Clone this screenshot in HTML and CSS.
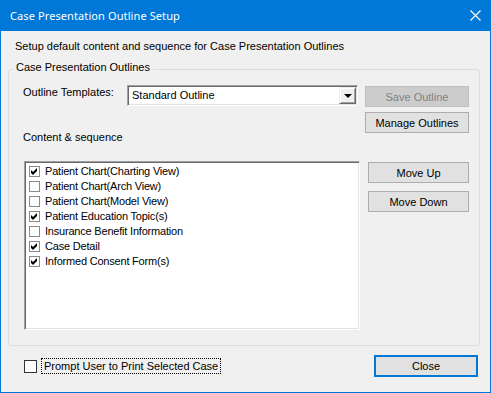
FILE: index.html
```html
<!DOCTYPE html>
<html lang="en">
<head>
  <meta charset="UTF-8" />
  <title>Case Presentation Outline Setup</title>
  <link rel="stylesheet" href="styles.css">
</head>
<body>
  <div class="window">
    <div class="titlebar">
      <span class="title">Case Presentation Outline Setup</span>
      <svg class="close-x" width="11" height="11" viewBox="0 0 11 11">
        <path d="M0.5 0.5 L10.5 10.5 M10.5 0.5 L0.5 10.5" stroke="#fff" stroke-width="1.1" fill="none" />
      </svg>
    </div>

    <div class="content">
      <p class="intro">Setup default content and sequence for Case Presentation Outlines</p>

      <div class="group">
        <span class="group-title">Case Presentation Outlines</span>

        <div class="top-row">
          <div class="left-col">
            <div class="template-row">
              <label class="field-label">Outline Templates:</label>
              <div class="combo">
                <span class="combo-text">Standard Outline</span>
                <span class="combo-btn"><i class="arrow"></i></span>
              </div>
            </div>
            <div class="section-label">Content &amp; sequence</div>
          </div>
          <div class="btn-col wide">
            <button class="btn" disabled>Save Outline</button>
            <button class="btn">Manage Outlines</button>
          </div>
        </div>

        <div class="list-row">
          <ul class="checklist">
            <li><span class="cb"><svg width="11" height="11" viewBox="0 0 11 11"><polygon points="2,4 4,6 8,2 8,5 4,9 2,7" fill="#000" /></svg></span>Patient Chart(Charting View)</li>
            <li><span class="cb"></span>Patient Chart(Arch View)</li>
            <li><span class="cb"></span>Patient Chart(Model View)</li>
            <li><span class="cb"><svg width="11" height="11" viewBox="0 0 11 11"><polygon points="2,4 4,6 8,2 8,5 4,9 2,7" fill="#000" /></svg></span>Patient Education Topic(s)</li>
            <li><span class="cb"></span>Insurance Benefit Information</li>
            <li><span class="cb"><svg width="11" height="11" viewBox="0 0 11 11"><polygon points="2,4 4,6 8,2 8,5 4,9 2,7" fill="#000" /></svg></span>Case Detail</li>
            <li><span class="cb"><svg width="11" height="11" viewBox="0 0 11 11"><polygon points="2,4 4,6 8,2 8,5 4,9 2,7" fill="#000" /></svg></span>Informed Consent Form(s)</li>
          </ul>
          <div class="btn-col">
            <button class="btn move-up">Move Up</button>
            <button class="btn move-down">Move Down</button>
          </div>
        </div>
      </div>

      <div class="footer">
        <label class="prompt">
          <span class="box"></span>
          <span class="focus">Prompt User to Print Selected Case</span>
        </label>
        <button class="btn close-btn">Close</button>
      </div>
    </div>
  </div>
</body>
</html>
```

FILE: styles.css
```css
body {
  margin: 0;
  font-family: 'Liberation Sans', Arial, sans-serif;
  font-size: 11px;
  color: #000;
}

.window {
  width: 491px;
  height: 393px;
  box-sizing: border-box;
  border: 1px solid #0078d7;
  border-top: none;
  background: #f0f0f0;
}

.titlebar {
  height: 31px;
  background: #0078d7;
  color: white;
  display: flex;
  align-items: center;
  justify-content: space-between;
  padding: 0 9px;
}

.title {
  font-family: 'Noto Sans', sans-serif;
  font-size: 11px;
  letter-spacing: 0.1px;
}

.close-x {
  margin-top: -1px;
}

.content {
  padding: 9px 10px 0 7px;
}

.intro {
  margin: 0 0 0 7px;
  line-height: 13px;
}

.group {
  margin-top: 16px;
  border: 1px solid #dcdcdc;
  border-radius: 3px;
  display: flex;
  flex-direction: column;
  padding-bottom: 15px;
}

.group-title {
  align-self: flex-start;
  margin: -9px 0 0 4px;
  padding: 0 3px;
  background: #f0f0f0;
  line-height: 13px;
}

.top-row {
  display: flex;
  margin-top: 11px;
  padding: 0 10px 0 14px;
  gap: 7px;
}

.left-col {
  width: 335px;
}

.template-row {
  display: flex;
}

.field-label {
  width: 104px;
  margin-top: 1px;
  line-height: 13px;
}

.combo {
  width: 231px;
  height: 21px;
  box-sizing: border-box;
  background: #fff;
  border: 1px solid;
  border-color: #a0a0a0 #fff #fff #a0a0a0;
  box-shadow: inset 1px 1px 0 #696969, inset -1px -1px 0 #e3e3e3;
  padding: 1px;
  display: flex;
}

.combo-text {
  flex: 1;
  line-height: 17px;
  padding-left: 3px;
}

.combo-btn {
  width: 17px;
  height: 17px;
  box-sizing: border-box;
  background: #f0f0f0;
  border: 1px solid;
  border-color: #f0f0f0 #696969 #696969 #f0f0f0;
  box-shadow: inset 1px 1px 0 #fff, inset -1px -1px 0 #a0a0a0;
  display: flex;
  align-items: center;
  justify-content: center;
}

.arrow {
  width: 0;
  height: 0;
  border-left: 4px solid transparent;
  border-right: 4px solid transparent;
  border-top: 4px solid #000;
  margin-top: 1px;
}

.section-label {
  margin-top: 25px;
  line-height: 13px;
}

.btn-col {
  display: flex;
  flex-direction: column;
  width: 101px;
}

.btn-col.wide {
  width: 104px;
}

.btn {
  height: 21px;
  box-sizing: border-box;
  background: #e1e1e1;
  border: 1px solid #adadad;
  font-family: 'Liberation Sans', Arial, sans-serif;
  font-size: 11px;
  color: #000;
  padding: 0;
}

.btn:disabled {
  background: #cccccc;
  border-color: #bfbfbf;
  color: #838383;
}

.wide .btn:first-child {
  margin-top: 1px;
}

.wide .btn + .btn {
  margin-top: 5px;
}

.list-row {
  display: flex;
  margin-top: 17px;
  padding: 0 10px 0 15px;
  gap: 8px;
}

.checklist {
  list-style: none;
  margin: 0;
  padding: 2px 0 0 4px;
  width: 336px;
  height: 169px;
  box-sizing: border-box;
  background: #fff;
  border: 1px solid;
  border-color: #a0a0a0 #fff #fff #a0a0a0;
  box-shadow: inset 1px 1px 0 #696969, inset -1px -1px 0 #e3e3e3;
}

.checklist li {
  display: flex;
  align-items: center;
  height: 15px;
  line-height: 15px;
  letter-spacing: -0.2px;
}

.cb {
  width: 11px;
  height: 11px;
  box-sizing: border-box;
  border: 1px solid #8a8a8a;
  background: #fff;
  margin-right: 5px;
  display: flex;
}

.cb svg {
  margin: -1px;
}

.move-up {
  margin-top: 1px;
}

.move-down {
  margin-top: 8px;
}

.footer {
  display: flex;
  align-items: center;
  justify-content: space-between;
  margin-top: 9px;
  padding-left: 16px;
}

.prompt {
  display: flex;
  align-items: center;
}

.box {
  width: 13px;
  height: 13px;
  box-sizing: border-box;
  border: 1px solid #333;
  background: #fff;
  margin-right: 4px;
}

.focus {
  border: 1px dotted #000;
  padding: 0 2px;
  line-height: 14px;
}

.close-btn {
  width: 104px;
  height: 22px;
  border: 2px solid #0078d7;
  margin-right: 2px;
}
```
